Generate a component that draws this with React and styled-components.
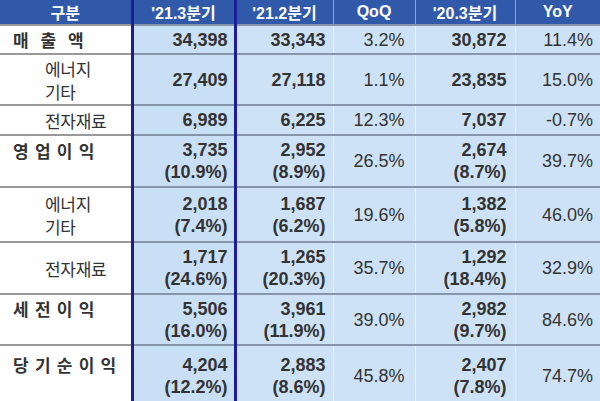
import React from "react";
import styled, { createGlobalStyle } from "styled-components";

const GlobalStyle = createGlobalStyle`
  html, body {
    margin: 0;
    padding: 0;
    background: #ffffff;
    overflow: hidden;
  }
`;

// Whole results table
const Table = styled.table`
  width: 600px;
  border-collapse: collapse;
  table-layout: fixed;
  font-family: "Liberation Sans", Arial, "Noto Sans CJK KR", sans-serif;
  color: #333333;
`;

const HeadRow = styled.tr`
  height: 23px;
  background: #3159aa;
`;

const HeadCell = styled.th`
  padding: 0;
  font-size: 16px;
  font-weight: bold;
  color: #ffffff;
  text-align: center;
  border-left: 1px solid #86a3d6;
  ${p => p.$first && "border-left: none;"}
  ${p => p.$focus && "border-left: 3px solid #1d1d9c; border-right: 3px solid #1d1d9c;"}
`;

const Row = styled.tr`
  height: ${p => p.$h}px;
  border-top: 2px solid #8596ab;
`;

// Left column: row names
const LabelCell = styled.td`
  padding: 0 0 ${p => (p.$raised ? "22px" : "0")} ${p => (p.$sub ? "45px" : "13px")};
  background: #ffffff;
  font-family: "Noto Sans CJK KR", "Liberation Sans", sans-serif;
  font-size: 17px;
  font-weight: ${p => (p.$sub ? 400 : 700)};
  letter-spacing: ${p => p.$ls || 0}px;
  line-height: 23px;
  white-space: pre;
  vertical-align: middle;
  border-top: 2px solid #9a9a9a;
`;

// Value cells in the blue area
const ValueCell = styled.td`
  padding: 0 ${p => p.$pad || 8}px 0 0;
  background: #cde2f6;
  text-align: right;
  font-size: 18px;
  font-weight: ${p => (p.$bold ? 700 : 400)};
  line-height: 22px;
  vertical-align: middle;
  border-left: 1px solid #e9f1fa;
  ${p => p.$focus && "border-left: 3px solid #1d1d9c; border-right: 3px solid #1d1d9c; background: #c9dff5;"}
`;

const Line = styled.div`
  white-space: nowrap;
`;

const rows = [
  { label: "매 출 액", ls: 4, h: 29, v: [["34,398"], ["33,343"], "3.2%", ["30,872"], "11.4%"] },
  { label: "에너지\n기타", sub: true, ls: -0.3, h: 51, v: [["27,409"], ["27,118"], "1.1%", ["23,835"], "15.0%"] },
  { label: "전자재료", sub: true, ls: -0.3, h: 30, v: [["6,989"], ["6,225"], "12.3%", ["7,037"], "-0.7%"] },
  { label: "영 업 이 익", ls: 1.2, h: 52, raised: true, v: [["3,735", "(10.9%)"], ["2,952", "(8.9%)"], "26.5%", ["2,674", "(8.7%)"], "39.7%"] },
  { label: "에너지\n기타", sub: true, ls: -0.3, h: 55, v: [["2,018", "(7.4%)"], ["1,687", "(6.2%)"], "19.6%", ["1,382", "(5.8%)"], "46.0%"] },
  { label: "전자재료", sub: true, ls: -0.3, h: 52, v: [["1,717", "(24.6%)"], ["1,265", "(20.3%)"], "35.7%", ["1,292", "(18.4%)"], "32.9%"] },
  { label: "세 전 이 익", ls: 1.2, h: 51, raised: true, v: [["5,506", "(16.0%)"], ["3,961", "(11.9%)"], "39.0%", ["2,982", "(9.7%)"], "84.6%"] },
  { label: "당 기 순 이 익", ls: 1.2, h: 60, raised: true, v: [["4,204", "(12.2%)"], ["2,883", "(8.6%)"], "45.8%", ["2,407", "(7.8%)"], "74.7%"] },
];

const pads = [6, 7, 10, 8, 7];

export default function App() {
  return (
    <>
      <GlobalStyle />
      <Table>
        <colgroup>
          <col style={{ width: 132 }} />
          <col style={{ width: 103 }} />
          <col style={{ width: 98 }} />
          <col style={{ width: 82 }} />
          <col style={{ width: 100 }} />
          <col style={{ width: 85 }} />
        </colgroup>
        <thead>
          <HeadRow>
            <HeadCell $first>구분</HeadCell>
            <HeadCell $focus>'21.3분기</HeadCell>
            <HeadCell>'21.2분기</HeadCell>
            <HeadCell>QoQ</HeadCell>
            <HeadCell>'20.3분기</HeadCell>
            <HeadCell>YoY</HeadCell>
          </HeadRow>
        </thead>
        <tbody>
          {rows.map((r, i) => (
            <Row key={i} $h={r.h}>
              <LabelCell $sub={r.sub} $ls={r.ls} $raised={r.raised}>
                {r.label}
              </LabelCell>
              {r.v.map((val, j) => (
                <ValueCell key={j} $bold={Array.isArray(val)} $focus={j === 0} $pad={pads[j]}>
                  {Array.isArray(val) ? val.map((t, k) => <Line key={k}>{t}</Line>) : val}
                </ValueCell>
              ))}
            </Row>
          ))}
        </tbody>
      </Table>
    </>
  );
}
